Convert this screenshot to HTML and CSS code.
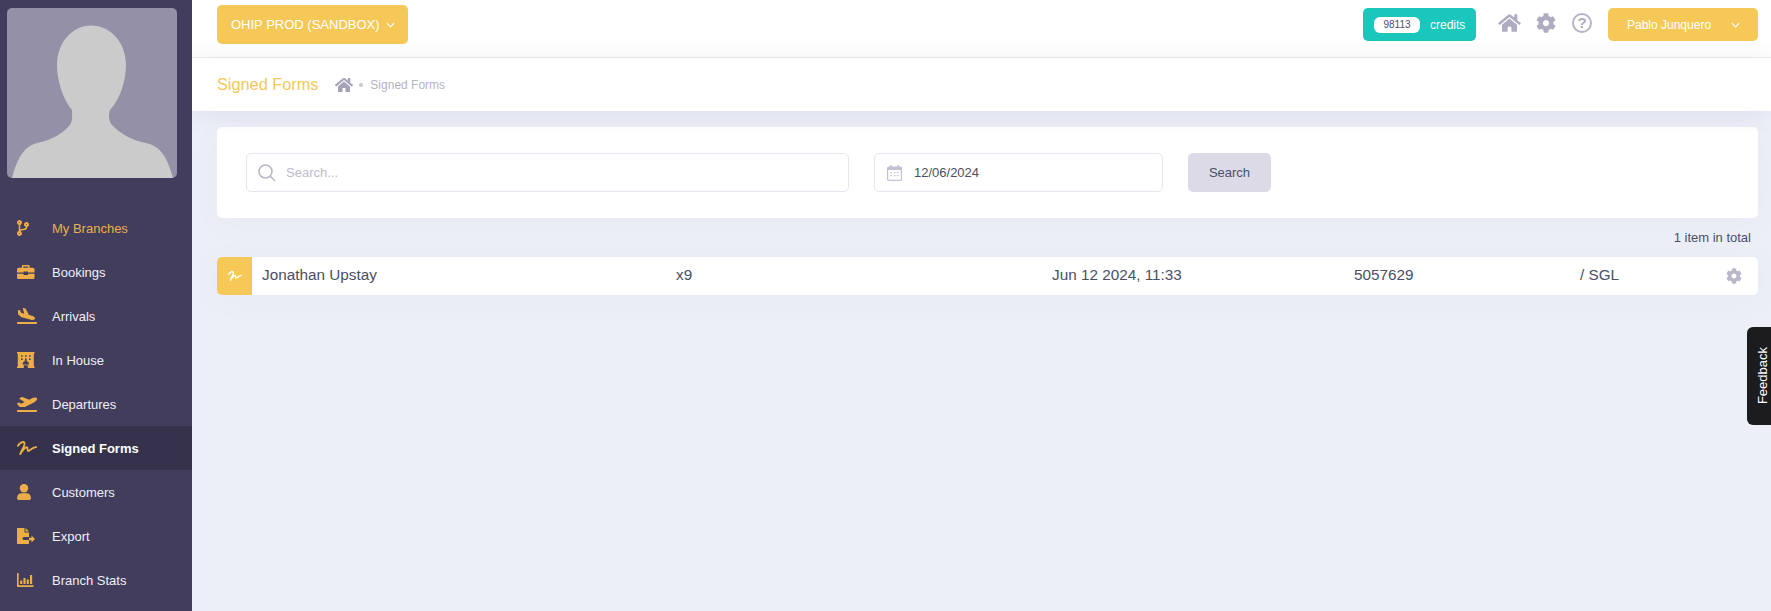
FILE: index.html
```html
<!DOCTYPE html>
<html lang="en">
<head>
<meta charset="utf-8">
<title>Signed Forms</title>
<link rel="stylesheet" href="styles.css">
</head>
<body>
<div class="app">
  <aside class="sidebar">
    <div class="avatar">
      <svg viewBox="0 0 170 170" class="avatar-img"><path fill="#cbcbcb" d="M84 17.500C104 17.500 119 35 119 57C119 72 113 92 103 102C101 107 102 113 105 117C114 126 124 132 139 135C153 138 160 148 166 170L5 170C11 148 18 138 30 135C45 132 55 126 63 117C66 112 65 107 65 102C56 92 50 72 50 57C50 35 65 17.500 84 17.500Z"/></svg>
    </div>
    <nav class="menu">
      <a class="menu-item link-active"><span class="mi-box"><svg class="mi h16" viewBox="0 0 384 512" preserveAspectRatio="xMinYMid meet"><path d="M384 144c0-44.200-35.800-80-80-80s-80 35.800-80 80c0 36.400 24.300 67.100 57.500 76.800-.6 16.100-4.200 28.500-11 36.900-15.400 19.200-49.300 22.400-85.200 25.700-28.200 2.600-57.400 5.400-81.300 16.900v-144c32.500-10.200 56-40.500 56-76.300 0-44.200-35.800-80-80-80S0 35.800 0 80c0 35.800 23.500 66.100 56 76.300v199.300C23.500 365.900 0 396.200 0 432c0 44.200 35.800 80 80 80s80-35.800 80-80c0-34-21.200-63.100-51.200-74.600 3.100-5.200 7.800-9.800 14.900-13.400 16.200-8.200 40.400-10.400 66.100-12.800 42.200-3.900 90-8.400 118.200-43.400 14-17.400 21.100-39.800 21.600-67.900 31.600-10.800 54.400-40.700 54.400-75.900zM80 64c8.800 0 16 7.200 16 16s-7.200 16-16 16-16-7.200-16-16 7.200-16 16-16zm0 384c-8.800 0-16-7.200-16-16s7.200-16 16-16 16 7.200 16 16-7.200 16-16 16zm224-320c8.800 0 16 7.200 16 16s-7.200 16-16 16-16-7.200-16-16 7.200-16 16-16z"/></svg></span>My Branches</a>
      <a class="menu-item"><span class="mi-box"><svg class="mi h14" viewBox="0 2 20 16" preserveAspectRatio="xMinYMid meet"><path d="M0 10.500V7a2 2 0 0 1 2-2h3.500V3.500A1.500 1.500 0 0 1 7 2h6a1.500 1.500 0 0 1 1.500 1.500V5H18a2 2 0 0 1 2 2v3.500h-7.500V9.500h-5v1zM7.200 5h5.600V3.700H7.200zM0 12h7.500v1.500h5V12H20v4.500a1.500 1.500 0 0 1-1.500 1.500h-17A1.500 1.500 0 0 1 0 16.500z"/></svg></span>Bookings</a>
      <a class="menu-item"><span class="mi-box"><svg class="mi h16" viewBox="0 0 640 512" preserveAspectRatio="xMinYMid meet"><path d="M624 448H16c-8.840 0-16 7.160-16 16v32c0 8.840 7.160 16 16 16h608c8.840 0 16-7.160 16-16v-32c0-8.840-7.160-16-16-16zM44.810 205.660l88.740 80a62.607 62.607 0 0 0 25.470 13.930l287.600 78.350c26.480 7.210 54.560 8.720 81 1.360 29.670-8.270 43.440-21.210 47.250-35.710 3.830-14.500-1.730-32.710-23.370-54.960-19.280-19.820-44.350-32.790-70.830-40l-97.510-26.560L282.800 30.220c-1.510-5.810-5.950-10.350-11.660-11.910L206.050.58c-10.560-2.880-20.900 5.320-20.710 16.440l47.920 164.210-102.200-27.840-27.590-67.880c-1.930-4.890-6.010-8.570-11.020-9.930L52.720 64.750c-10.340-2.820-20.530 5-20.720 15.880l.23 101.780c.19 8.910 6.030 17.340 12.580 23.250z"/></svg></span>Arrivals</a>
      <a class="menu-item"><span class="mi-box"><svg class="mi h16" viewBox="0 0 22 20" preserveAspectRatio="xMinYMid meet"><path fill-rule="evenodd" d="M0 0h22v2h-1v16h1v2h-8.500v-3.500h-5V20H0v-2h1V2H0zM5 4v2h2V4zm5 0v2h2V4zm5 0v2h2V4zM5 8v2h2V8zm5 0v2h2V8zm5 0v2h2V8zM7 15.500h8c0-2-1.500-3.500-2.800-3.800a1.300 1.300 0 1 0-2.400 0C8.500 12 7 13.500 7 15.500z"/></svg></span>In House</a>
      <a class="menu-item"><span class="mi-box"><svg class="mi h16" viewBox="0 0 640 512" preserveAspectRatio="xMinYMid meet"><path d="M624 448H16c-8.840 0-16 7.160-16 16v32c0 8.840 7.160 16 16 16h608c8.840 0 16-7.160 16-16v-32c0-8.840-7.160-16-16-16zM80.550 341.270c6.280 6.840 15.100 10.720 24.330 10.710l130.540-.18a65.620 65.620 0 0 0 29.640-7.120l290.960-147.650c26.740-13.570 50.710-32.940 67.020-58.310 18.310-28.480 20.300-49.090 13.070-63.650-7.210-14.570-24.740-25.270-58.250-27.450-29.850-1.940-59.540 5.920-86.280 19.480l-98.510 49.990-218.700-82.060a17.799 17.799 0 0 0-18-1.110L90.620 67.290c-10.670 5.410-13.250 19.650-5.170 28.530l156.220 98.100-103.210 52.380-72.350-36.470a17.804 17.804 0 0 0-16.070.02L9.910 230.220c-10.440 5.300-13.190 19.120-5.570 28.080l76.210 82.970z"/></svg></span>Departures</a>
      <a class="menu-item menu-current"><span class="mi-box"><svg class="mi h14" viewBox="0 0 21 15" preserveAspectRatio="xMinYMid meet"><path class="sig" d="M1 5C3 1.500 7 0 8 2C9 5 5 9 3.500 14C6 10 10 5 11 7C11.500 9 11 11 12.500 10.500C15 9.500 17 6.500 20.500 6.500"/></svg></span>Signed Forms</a>
      <a class="menu-item"><span class="mi-box"><svg class="mi h16" viewBox="0 0 14 16" preserveAspectRatio="xMinYMid meet"><circle cx="7" cy="4.200" r="4.200"/><path d="M0 14C0 11 2 9.200 4.500 9.200h5C12 9.200 14 11 14 14a2 2 0 0 1-2 2H2a2 2 0 0 1-2-2z"/></svg></span>Customers</a>
      <a class="menu-item"><span class="mi-box"><svg class="mi h16" viewBox="0 0 18 16" preserveAspectRatio="xMinYMid meet"><path d="M0 0h7.500v4.500H12V9H7a1.500 1.500 0 0 0 0 3h5v4H0zM8.500 0L12 3.500H8.500zM12 9.800h2.500V7.500L18 11l-3.500 3.500v-2.300H12z"/></svg></span>Export</a>
      <a class="menu-item"><span class="mi-box"><svg class="mi h14" viewBox="0 0 20 17" preserveAspectRatio="xMinYMid meet"><path d="M0 0h2v15h18v2H0zM3.800 9h2.600v4.500H3.800zM7.800 6h2.600v7.500H7.800zM11.800 8h2.600v5.500h-2.600zM15.800 2.500h2.600v11h-2.600z"/></svg></span>Branch Stats</a>
    </nav>
  </aside>
  <main class="main">
    <header class="topbar">
      <button class="btn-yellow project">OHIP PROD (SANDBOX)<svg class="chev" viewBox="0 0 10 6"><path d="M1 1l4 4 4-4"/></svg></button>
      <div class="top-right">
        <div class="credits"><span class="pill">98113</span><span>credits</span></div>
        <svg class="top-ico home" viewBox="0 0 576 512"><path d="M280.370 148.260L96 300.110V464a16 16 0 0 0 16 16l112.060-.29a16 16 0 0 0 15.920-16V368a16 16 0 0 1 16-16h64a16 16 0 0 1 16 16v95.640a16 16 0 0 0 16 16.050L464 480a16 16 0 0 0 16-16V300L295.670 148.260a12.190 12.190 0 0 0-15.300 0zM571.600 251.470L488 182.560V44.050a12 12 0 0 0-12-12h-56a12 12 0 0 0-12 12v72.610L318.470 43a48 48 0 0 0-61 0L4.340 251.470a12 12 0 0 0-1.600 16.900l25.500 31A12 12 0 0 0 45.150 301l235.220-193.740a12.190 12.190 0 0 1 15.300 0L530.900 301a12 12 0 0 0 16.900-1.600l25.500-31a12 12 0 0 0-1.700-16.930z"/></svg>
        <svg class="top-ico cog" viewBox="0 0 512 512"><path d="M487.400 315.700l-42.600-24.600c4.300-23.200 4.300-47 0-70.200l42.600-24.600c4.900-2.800 7.100-8.600 5.500-14-11.100-35.600-30-67.800-54.700-94.600-3.800-4.100-10-5.100-14.800-2.300L380.800 110c-17.900-15.400-38.500-27.300-60.800-35.100V25.800c0-5.600-3.900-10.500-9.400-11.700-36.700-8.200-74.300-7.800-109.200 0-5.500 1.200-9.400 6.100-9.400 11.700V75c-22.200 7.900-42.800 19.800-60.800 35.100L88.700 85.500c-4.900-2.800-11-1.900-14.800 2.300-24.700 26.700-43.600 58.900-54.700 94.600-1.700 5.400.6 11.200 5.500 14L67.300 221c-4.300 23.200-4.300 47 0 70.200l-42.600 24.600c-4.900 2.800-7.100 8.600-5.500 14 11.100 35.600 30 67.800 54.700 94.600 3.800 4.100 10 5.100 14.800 2.300l42.600-24.600c17.900 15.400 38.500 27.300 60.800 35.100v49.200c0 5.600 3.900 10.500 9.400 11.700 36.700 8.200 74.300 7.800 109.200 0 5.500-1.200 9.400-6.100 9.400-11.700v-49.200c22.200-7.900 42.800-19.800 60.800-35.100l42.600 24.600c4.900 2.800 11 1.900 14.800-2.300 24.700-26.700 43.600-58.900 54.700-94.600 1.500-5.500-.7-11.300-5.600-14.100zM256 336c-44.100 0-80-35.900-80-80s35.900-80 80-80 80 35.900 80 80-35.900 80-80 80z"/></svg>
        <span class="help">?</span>
        <button class="btn-yellow user"><span>Pablo Junquero</span><svg class="chev" viewBox="0 0 10 6"><path d="M1 1l4 4 4-4"/></svg></button>
      </div>
    </header>
    <div class="subheader">
      <h1 class="title">Signed Forms</h1>
      <svg class="crumb-home" viewBox="0 0 576 512"><path d="M280.370 148.260L96 300.110V464a16 16 0 0 0 16 16l112.060-.29a16 16 0 0 0 15.920-16V368a16 16 0 0 1 16-16h64a16 16 0 0 1 16 16v95.640a16 16 0 0 0 16 16.050L464 480a16 16 0 0 0 16-16V300L295.670 148.260a12.190 12.190 0 0 0-15.300 0zM571.600 251.470L488 182.560V44.050a12 12 0 0 0-12-12h-56a12 12 0 0 0-12 12v72.610L318.470 43a48 48 0 0 0-61 0L4.340 251.470a12 12 0 0 0-1.600 16.900l25.500 31A12 12 0 0 0 45.150 301l235.220-193.740a12.190 12.190 0 0 1 15.300 0L530.900 301a12 12 0 0 0 16.900-1.600l25.500-31a12 12 0 0 0-1.700-16.930z"/></svg>
      <span class="dot"></span>
      <span class="crumb">Signed Forms</span>
    </div>
    <section class="content">
      <div class="card search-card">
        <div class="field field-search">
          <svg class="fi" viewBox="0 0 18 18"><circle cx="7.500" cy="7.500" r="6.500"/><path d="M12.300 12.300L17 17"/></svg>
          <span class="placeholder">Search...</span>
        </div>
        <div class="field field-date">
          <svg class="fi cal" viewBox="0 0 15 16"><path class="cal-fill" fill-rule="evenodd" d="M3 0h1.500v1.500h6V0H12v1.500h1.500A1.500 1.500 0 0 1 15 3v11.500a1.500 1.500 0 0 1-1.500 1.500h-12A1.500 1.500 0 0 1 0 14.500V3a1.500 1.500 0 0 1 1.500-1.500H3zM1.200 5v9.300c0 .3.200.5.500.5h11.600c.3 0 .5-.2.500-.5V5zM3.500 7H5v1.300H3.500zM6.800 7h1.500v1.300H6.800zM10 7h1.500v1.300H10zM3.500 10H5v1.300H3.500zM6.800 10h1.500v1.300H6.800zM10 10h1.500v1.300H10z"/></svg>
          <span class="value">12/06/2024</span>
        </div>
        <button class="btn-search">Search</button>
      </div>
      <div class="total">1 item in total</div>
      <div class="card row">
        <div class="row-icon"><svg viewBox="0 0 21 15"><path class="sig-white" d="M1 5C3 1.500 7 0 8 2C9 5 5 9 3.500 14C6 10 10 5 11 7C11.500 9 11 11 12.500 10.500C15 9.500 17 6.500 20.500 6.500"/></svg></div>
        <span class="cell c-name">Jonathan Upstay</span>
        <span class="cell c-room">x9</span>
        <span class="cell c-date">Jun 12 2024, 11:33</span>
        <span class="cell c-num">5057629</span>
        <span class="cell c-type">/ SGL</span>
        <svg class="row-cog" viewBox="0 0 512 512"><path d="M487.400 315.700l-42.600-24.600c4.300-23.200 4.300-47 0-70.200l42.600-24.600c4.900-2.800 7.100-8.600 5.500-14-11.100-35.600-30-67.800-54.700-94.600-3.800-4.100-10-5.100-14.800-2.300L380.800 110c-17.900-15.400-38.500-27.300-60.800-35.100V25.800c0-5.600-3.900-10.500-9.400-11.700-36.700-8.200-74.300-7.800-109.200 0-5.500 1.200-9.400 6.100-9.400 11.700V75c-22.200 7.900-42.800 19.800-60.800 35.100L88.700 85.500c-4.900-2.800-11-1.900-14.800 2.300-24.700 26.700-43.600 58.900-54.700 94.600-1.700 5.400.6 11.200 5.500 14L67.300 221c-4.300 23.200-4.300 47 0 70.200l-42.600 24.600c-4.900 2.800-7.100 8.600-5.500 14 11.100 35.600 30 67.800 54.700 94.600 3.800 4.100 10 5.100 14.800 2.300l42.600-24.600c17.900 15.400 38.500 27.300 60.800 35.100v49.200c0 5.600 3.900 10.500 9.400 11.700 36.700 8.200 74.300 7.800 109.200 0 5.500-1.200 9.400-6.100 9.400-11.700v-49.200c22.200-7.900 42.800-19.800 60.800-35.100l42.600 24.600c4.900 2.800 11 1.900 14.800-2.300 24.700-26.700 43.600-58.900 54.700-94.600 1.500-5.500-.7-11.300-5.600-14.100zM256 336c-44.100 0-80-35.900-80-80s35.900-80 80-80 80 35.900 80 80-35.900 80-80 80z"/></svg>
      </div>
    </section>
  </main>
</div>
<div class="feedback"><span>Feedback</span></div>
</body>
</html>
```

FILE: styles.css
```css
* { box-sizing: border-box; }
html, body { margin: 0; height: 100%; overflow: hidden; }
body { font-family: "Liberation Sans", Arial, sans-serif; background: #edeff8; color: #4a4f64; }
button { font-family: inherit; border: 0; padding: 0; }

.app { display: flex; height: 611px; }

.sidebar { width: 192px; flex: none; background: #423d5d; padding: 8px 0 0; position: relative; z-index: 3; }
.avatar { width: 170px; height: 170px; margin-left: 7px; border-radius: 5px; background: #9390a8; overflow: hidden; }
.avatar-img { display: block; width: 170px; height: 170px; }
.menu { margin-top: 28px; display: flex; flex-direction: column; }
.menu-item { height: 44px; display: flex; align-items: center; padding-left: 17px; font-size: 13px; color: #f0eff5; }
.mi-box { width: 35px; flex: none; display: flex; align-items: center; }
.mi { width: 20px; flex: none; fill: #edae49; }
.h16 { height: 16px; }
.h14 { height: 14px; }
.link-active { color: #edae49; }
.menu-current { background: #37324b; color: #fff; font-weight: 700; }
.sig { fill: none; stroke: #edae49; stroke-width: 2; stroke-linecap: round; stroke-linejoin: round; }

.main { flex: 1; min-width: 0; display: flex; flex-direction: column; }
.topbar { height: 58px; background: #fff; border-bottom: 1px solid #eeeef2; display: flex; align-items: flex-start; justify-content: space-between; padding: 5px 13px 0 25px; }
.btn-yellow { background: #f5c858; color: #fff; border-radius: 5px; display: flex; align-items: center; }
.project { width: 191px; height: 39px; padding-left: 14px; font-size: 13px; }
.chev { width: 9px; height: 6px; margin-left: 6px; fill: none; stroke: #fff; stroke-width: 1.300; }
.top-right { display: flex; align-items: center; height: 33px; margin-top: 3px; }
.credits { width: 113px; height: 33px; background: #1bc6bd; border-radius: 5px; color: #fff; font-size: 12px; display: flex; align-items: center; padding-left: 11px; gap: 10px; }
.pill { width: 46px; height: 16px; background: #fff; border-radius: 6px; color: #4a4f64; font-size: 10px; display: flex; align-items: center; justify-content: center; }
.top-ico { fill: #aeacc0; flex: none; margin-bottom: 3px; }
.home { width: 23px; height: 20px; margin-left: 22px; }
.cog { width: 20px; height: 20px; margin-left: 15px; }
.help { width: 20px; height: 20px; margin: 0 16px 3px 16px; border: 2px solid #b6b4c6; border-radius: 50%; color: #aeacc0; font-size: 15px; font-weight: 700; line-height: 16px; text-align: center; flex: none; }
.user { width: 150px; height: 33px; padding: 0 18px 0 19px; font-size: 12px; justify-content: space-between; }

.subheader { height: 53px; background: #fff; display: flex; align-items: center; padding-left: 25px; position: relative; z-index: 2; box-shadow: 0 2px 24px rgba(70, 70, 130, .1); }
.title { margin: 0 17px 0 0; font-size: 16.300px; font-weight: 400; color: #f5c858; }
.crumb-home { width: 18px; height: 16px; fill: #a4a2b8; }
.dot { width: 4px; height: 4px; border-radius: 50%; background: #c9c8d6; margin: 0 7px 0 6px; }
.crumb { font-size: 12px; color: #b4b3c4; }

.content { flex: 1; padding: 16px 13px 0 25px; }
.card { background: #fff; border-radius: 5px; box-shadow: 0 4px 30px rgba(70, 70, 130, .04); }
.search-card { height: 91px; padding: 26px 29px; display: flex; }
.field { height: 39px; border: 1px solid #e4e7ef; border-radius: 5px; display: flex; align-items: center; background: #fff; }
.field-search { width: 603px; padding-left: 11px; }
.field-date { width: 289px; margin-left: 25px; padding-left: 12px; }
.fi { width: 18px; height: 18px; fill: none; stroke: #b7b5c7; stroke-width: 1.500; flex: none; }
.cal { width: 15px; height: 16px; stroke: none; }
.cal-fill { fill: #c4c2d2; }
.placeholder { margin-left: 10px; font-size: 13px; color: #bdbbcc; }
.value { margin-left: 12px; font-size: 13px; color: #4a4f64; }
.btn-search { width: 83px; height: 39px; margin-left: 25px; background: #dcdae6; color: #4a4f64; border-radius: 5px; font-size: 13px; }

.total { height: 39px; display: flex; align-items: center; justify-content: flex-end; padding-right: 7px; font-size: 13px; color: #4a4f64; }
.row { height: 38px; display: flex; align-items: center; font-size: 15.300px; color: #4a4f64; overflow: hidden; }
.row-icon { width: 35px; height: 38px; background: #f5c858; display: flex; align-items: center; justify-content: center; flex: none; }
.row-icon svg { width: 14px; height: 10px; }
.sig-white { fill: none; stroke: #fff; stroke-width: 2; stroke-linecap: round; stroke-linejoin: round; }
.cell { flex: none; white-space: nowrap; margin-top: -2px; }
.c-name { margin-left: 10px; width: 414px; }
.c-room { width: 376px; }
.c-date { width: 302px; }
.c-num { width: 226px; }
.c-type { width: 146px; }
.row-cog { width: 16px; height: 16px; fill: #b9b8c8; flex: none; }

.feedback { position: absolute; right: 0; top: 327px; width: 24px; height: 98px; background: #1c1c1e; border-radius: 6px 0 0 6px; color: #fff; font-size: 13px; display: flex; align-items: center; justify-content: center; padding-left: 7px; }
.feedback span { writing-mode: vertical-rl; transform: rotate(180deg); }
```
